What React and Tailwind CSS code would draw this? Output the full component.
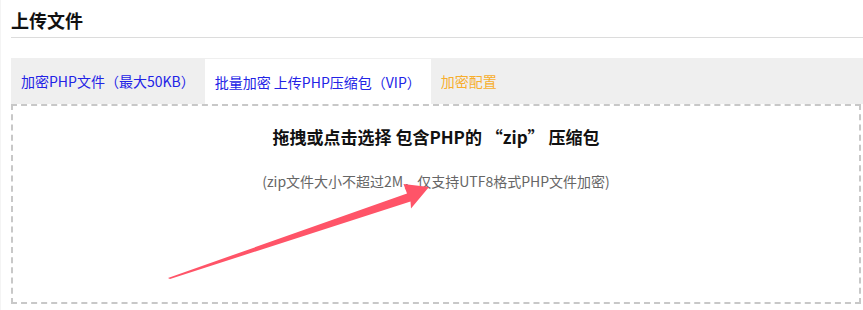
import React, { useState } from 'react';

const tabs = [
    { key: 'single', label: '加密PHP文件（最大50KB）', color: 'text-[#2323e6]' },
    { key: 'zip', label: '批量加密 上传PHP压缩包（VIP）', color: 'text-[#2323e6]' },
    { key: 'config', label: '加密配置', color: 'text-[#f7ae2d]' },
];

// red annotation arrow drawn over the drop zone
function Arrow() {
    return (
        <svg className="absolute left-0 top-0 pointer-events-none" width="863" height="310" viewBox="0 0 863 310">
            <polygon
                points="167,278 406,193.5 402.5,184 428,187 410,208.5 409.5,201.5 169,279"
                fill="#ff5468"
            />
        </svg>
    );
}

export default function App() {
    const [active, setActive] = useState('zip');

    return (
        <div
            className="relative w-[863px] h-[310px] bg-white border-l border-[#f4f4f4] pl-[10px] overflow-hidden"
            style={{ fontFamily: '"Noto Sans CJK SC", "Liberation Sans", sans-serif' }}
        >
            <h2 className="pt-[8px] h-[32px] text-[18px] leading-[24px] font-bold text-[#111]">上传文件</h2>
            <div className="mt-[5px] h-px bg-[#dcdcdc]" />

            <div className="mt-[20px] flex h-[46px] bg-[#efefef]">
                {tabs.map((t) => (
                    <button
                        key={t.key}
                        type="button"
                        onClick={() => setActive(t.key)}
                        className={`flex items-center pl-[10px] pr-[10px] text-[14px] leading-[20px] ${t.color} ${
                            active === t.key ? 'bg-white mt-px' : ''
                        }`}
                    >
                        {t.label}
                    </button>
                ))}
            </div>

            <div className="mr-[2px] h-[200px] border-2 border-dashed border-[#c8c8c8] flex flex-col items-center cursor-pointer">
                <p className="mt-[19px] text-[17px] leading-[24px] font-bold text-[#111]">
                    拖拽或点击选择 包含PHP的 “zip” 压缩包
                </p>
                <p className="mt-[22px] text-[14px] leading-[20px] text-[#666]">
                    (zip文件大小不超过2M，仅支持UTF8格式PHP文件加密)
                </p>
            </div>

            <Arrow />
        </div>
    );
}
